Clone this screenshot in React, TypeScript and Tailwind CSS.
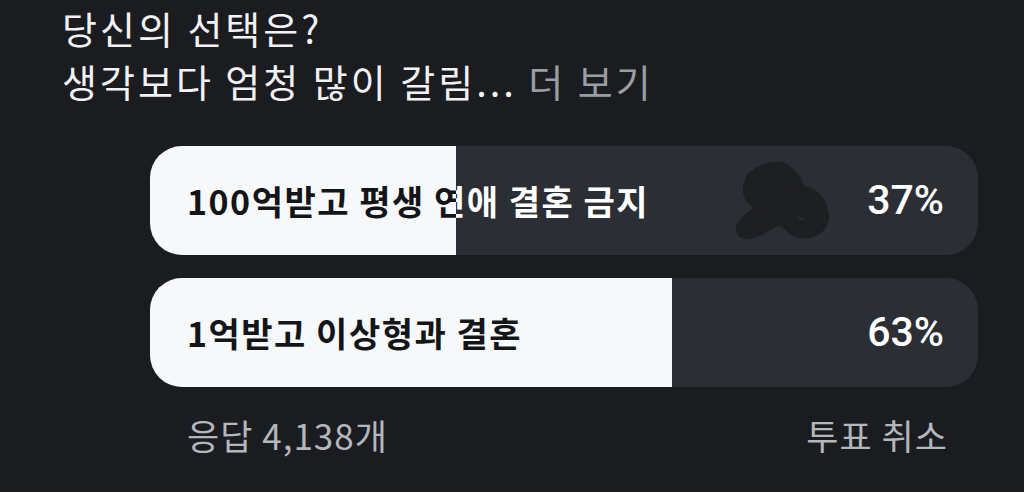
import React from "react";

const font = { fontFamily: '"Noto Sans CJK KR", "Noto Sans", sans-serif' };

function PollBar({ label, pct, scribble }: { label: string; pct: number; scribble?: boolean }) {
  return (
    <div className="relative h-[109px] w-[828px] overflow-hidden rounded-[32px] bg-[#2b2e35]">
      <div className="flex h-full items-center justify-between pl-[37px] pr-[34px] text-white">
        <span className="text-[34px] font-bold tracking-[1.5px]">{label}</span>
        <span className="text-[41px] font-medium" style={{ fontFamily: 'Roboto, "Noto Sans", sans-serif' }}>
          {pct}%
        </span>
      </div>
      <div
        className="absolute inset-y-0 left-0 overflow-hidden bg-[#f7f8f9]"
        style={{ width: `${pct}%` }}
      >
        <div className="flex h-full w-[828px] items-center pl-[37px] text-[#141518]">
          <span className="whitespace-nowrap text-[34px] font-bold tracking-[1.5px]">{label}</span>
        </div>
      </div>
      {scribble && (
        <svg className="absolute left-[582px] top-[12px]" width="105" height="90" viewBox="0 0 105 90">
          <g fill="none" stroke="#1e1f21" strokeWidth="18" strokeLinecap="round" strokeLinejoin="round">
            <path d="M22 22 C38 8 60 10 55 26 C50 42 28 42 32 30 C42 14 68 16 62 36 C56 56 26 70 16 72 C6 74 22 56 42 50 C62 44 76 50 84 62" />
            <path d="M50 44 C66 30 84 36 88 56 C90 70 72 76 62 68" />
            <path d="M22 24 C16 36 24 46 36 40" />
            <path d="M30 62 C40 56 50 58 58 64" />
          </g>
        </svg>
      )}
    </div>
  );
}

export default function App() {
  return (
    <div className="h-[492px] w-[1024px] overflow-hidden bg-[#1b1c20]" style={font}>
      <div className="pl-[62px] pt-[1px] text-[38px] leading-[53px] tracking-[3px] text-[#f2f2f4]">
        <div>당신의 선택은?</div>
        <div>
          생각보다 엄청 많이 갈림... <span className="text-[#9b9da4]">더 보기</span>
        </div>
      </div>
      <div className="ml-[150px] mt-[39px] flex flex-col gap-[23px]">
        <PollBar label="100억받고 평생 연애 결혼 금지" pct={37} scribble />
        <PollBar label="1억받고 이상형과 결혼" pct={63} />
      </div>
      <div className="mt-[28px] flex w-[948px] items-center justify-between pl-[187px] text-[35px] leading-[40px] tracking-[1px] text-[#b3b6bd]">
        <span>응답 4,138개</span>
        <span>투표 취소</span>
      </div>
    </div>
  );
}
